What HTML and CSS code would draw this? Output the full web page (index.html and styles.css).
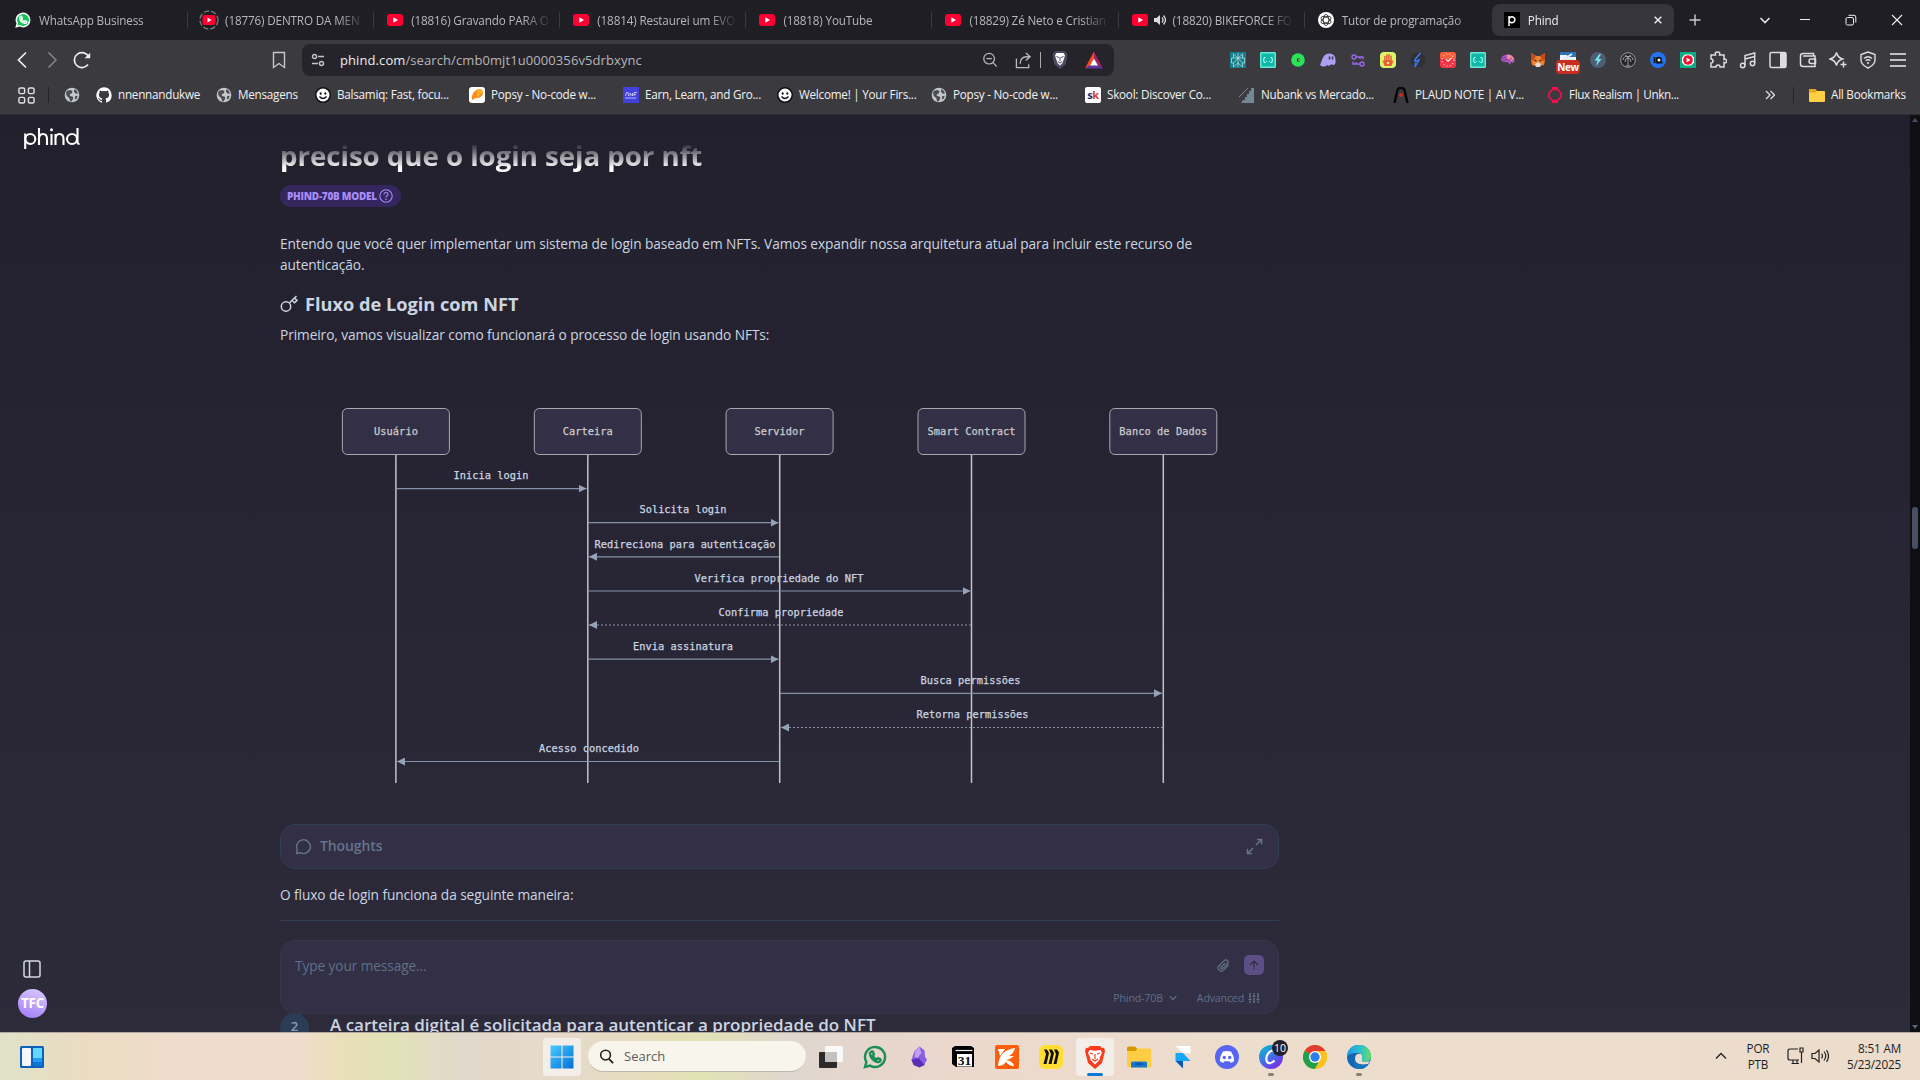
FILE: index.html
```html
<!DOCTYPE html>
<html lang="pt">
<head>
<meta charset="utf-8">
<title>Phind</title>
<link rel="stylesheet" href="styles.css">
</head>
<body>
<svg class="defs" width="0" height="0">
  <symbol id="yt" viewBox="0 0 16 16"><rect y="2" width="16" height="12" rx="3" fill="#f03"/><path d="M6.3 5.3v5.4L11 8z" fill="#fff"/></symbol>
  <symbol id="globe" viewBox="0 0 16 16"><circle cx="8" cy="8" r="7.3" fill="#c3c6ca"/><path d="M3 3.8l3.6-.9 1.8 1.3-.4 2L5.700 7.300 6 9l3 .7.2 2-1.700 2.900-1.500-.3-.6-3-2.600-2.200L2 6zM10.200 2l2.500 1.700 1.300 2.800-2.200.3-1.800-2zM11 9.300l2.700-.6-1 3-1.600.8z" fill="#4b4d52"/></symbol>
  <symbol id="smile" viewBox="0 0 16 16"><circle cx="8" cy="8" r="8" fill="#111"/><circle cx="8" cy="8" r="6.500" fill="#fff"/><ellipse cx="5.700" cy="6.500" rx="1" ry="1.300" fill="#111"/><ellipse cx="10.300" cy="6.500" rx="1" ry="1.300" fill="#111"/><path d="M4.500 9.500q3.500 4 7 0" fill="none" stroke="#111" stroke-width="1.300"/></symbol>
  <symbol id="wa" viewBox="0 0 24 24"><path d="M2 22l1.400-5A10 10 0 1 1 7 20.600z"/><path d="M8.500 6.500c-1 .4-1.700 1.600-1.400 3 .7 3.500 4 6.800 7.500 7.500 1.400.2 2.600-.6 3-1.700l-.2-.9-2.300-1.200-1.400 1.300c-1.700-.6-3.300-2.100-4-3.900l1.200-1.400-1.100-2.500z" class="phone"/></symbol>
  <symbol id="brackets" viewBox="0 0 16 16"><rect width="16" height="16" rx="1" fill="#0cb8a6"/><rect x=".7" y=".7" width="14.600" height="14.600" rx="1" fill="none" stroke="#6ae9da" stroke-width="1.400"/><path d="M5.500 5.500H4v2L3.200 8l.8.500v2h1.500M10.500 5.500H12v2l.8.500-.8.500v2h-1.500" fill="none" stroke="#d5fff9"/><path d="M6.300 9.500h.8M8.900 9.500h.8" stroke="#d5fff9"/></symbol>
</svg>

<header class="tabs">
  <div class="tab"><svg class="ic wa-fill"><use href="#wa"/></svg><span>WhatsApp Business</span></div>
  <div class="tab"><svg class="ic spin" viewBox="0 0 20 20"><circle cx="10" cy="10" r="9" fill="none" stroke="#77757c" stroke-width="1.400" stroke-dasharray="5.400 2"/><rect x="3.500" y="5" width="13" height="10" rx="2" fill="#f03"/><path d="M8.500 7.500v5l4-2.500z" fill="#fff"/></svg><span>(18776) DENTRO DA MEN</span></div>
  <div class="tab"><svg class="ic"><use href="#yt"/></svg><span>(18816) Gravando PARA O</span></div>
  <div class="tab"><svg class="ic"><use href="#yt"/></svg><span>(18814) Restaurei um EVO</span></div>
  <div class="tab"><svg class="ic"><use href="#yt"/></svg><span>(18818) YouTube</span></div>
  <div class="tab"><svg class="ic"><use href="#yt"/></svg><span>(18829) Zé Neto e Cristian</span></div>
  <div class="tab playing"><svg class="ic"><use href="#yt"/></svg><svg class="ic audio" viewBox="0 0 14 14"><path d="M1 5h2.500L7 2v10L3.500 9H1z" fill="#ddd"/><path d="M9 4.500q2 2.500 0 5M10.500 2.500q4 4.500 0 9" fill="none" stroke="#ddd" stroke-width="1.300"/></svg><span>(18820) BIKEFORCE FO</span></div>
  <div class="tab last"><svg class="ic" viewBox="0 0 16 16"><circle cx="8" cy="8" r="8" fill="#fff"/><g fill="none" stroke="#222" stroke-width=".8"><ellipse cx="8" cy="8" rx="2.800" ry="5.500"/><ellipse cx="8" cy="8" rx="2.800" ry="5.500" transform="rotate(60 8 8)"/><ellipse cx="8" cy="8" rx="2.800" ry="5.500" transform="rotate(120 8 8)"/></g></svg><span>Tutor de programação</span></div>
  <div class="tab active"><svg class="ic" viewBox="0 0 16 16"><rect width="16" height="16" fill="#000"/><path d="M5 14V4M5 7a3 3 0 1 1 0 1.500" fill="none" stroke="#fff" stroke-width="1.500"/></svg><span>Phind</span><svg class="close" viewBox="0 0 8 8"><path d="M.7.700l6.600 6.600M7.300.700L.7 7.300" stroke="#e8e8ea" stroke-width="1.500"/></svg></div>
  <svg class="win plus" viewBox="0 0 12 12"><path d="M6 .5v11M.5 6h11" stroke="#ccc" stroke-width="1.400"/></svg>
  <svg class="win" viewBox="0 0 12 12"><path d="M1.500 4L6 8.500 10.500 4" fill="none" stroke="#e5e5e5" stroke-width="1.600"/></svg>
  <svg class="win min" viewBox="0 0 12 12"><path d="M1 5.500h10" stroke="#eee"/></svg>
  <svg class="win" viewBox="0 0 12 12"><rect x="1" y="3.500" width="7.500" height="7.500" rx="1.500" fill="none" stroke="#eee"/><path d="M3.500 1.300H9Q10.800 1.300 10.800 3v5.500" fill="none" stroke="#eee"/></svg>
  <svg class="win" viewBox="0 0 12 12"><path d="M1 1l10 10M11 1L1 11" stroke="#eee" stroke-width="1.100"/></svg>
</header>

<div class="toolbar">
  <svg class="nav back" viewBox="0 0 18 18"><path d="M12 1.500L4.500 9l7.500 7.500" fill="none" stroke="#eee" stroke-width="1.700"/></svg>
  <svg class="nav" viewBox="0 0 18 18"><path d="M5.500 1.500L13 9l-7.500 7.500" fill="none" stroke="#85848a" stroke-width="1.500"/></svg>
  <svg class="nav" viewBox="0 0 18 18"><path d="M15 13.500A7.500 7.500 0 1 1 15.800 6" fill="none" stroke="#eee" stroke-width="1.700"/><path d="M11.500 7.200h5.700V1.800z" fill="#eee"/></svg>
  <svg class="mark" viewBox="0 0 18 18"><path d="M3.500 1.500h11v15L9 12.500l-5.500 4z" fill="none" stroke="#c9c9cd" stroke-width="1.400"/></svg>
  <div class="url">
    <svg class="tune" viewBox="0 0 14 14"><g fill="none" stroke="#c5c5ca" stroke-width="1.400"><circle cx="3.500" cy="3.500" r="2"/><path d="M7 3.500h6M1 10.500h6"/><circle cx="10.500" cy="10.500" r="2"/></g></svg>
    <span class="addr"><b>phind.com</b>/search/cmb0mjt1u0000356v5drbxync</span>
    <svg class="u1" viewBox="0 0 18 18"><g fill="none" stroke="#b9b8bd" stroke-width="1.400"><circle cx="8" cy="7.500" r="6"/><path d="M12.500 12l4 4.500M5 7.500h6"/></g></svg>
    <svg class="u2" viewBox="0 0 18 18"><path d="M1.500 7v9.500h13V13M5.500 12.500q0-7.500 7-7.500h3M11.500 1l4.500 4-4.500 4" fill="none" stroke="#b9b8bd" stroke-width="1.400"/></svg>
    <i class="bar"></i>
    <svg class="u3" viewBox="0 0 18 18"><path d="M4.500 0h9L16.500 3 15 13l-6 5-6-5L1.500 3z" fill="#4b4c60"/><path d="M5.500 2h7L14 4.500 12.500 9l-1 3L9 14.500 6.500 12l-1-3L4 4.500z" fill="#fff"/><path d="M5.500 5.500l2.500 1M12.500 5.500l-2.500 1M9 6v4M6.800 10.500L9 12l2.200-1.500" stroke="#4b4c60" fill="none"/></svg>
    <svg class="u4" viewBox="0 0 18 18"><path d="M9 .5L0 17.500l5-3L9 7.500z" fill="#ff4a20"/><path d="M9 .5l9 17-5-3L9 7.500z" fill="#9e1f63"/><path d="M0 17.500h18l-5-3.300H5z" fill="#5d36a0"/><path d="M9 7.500l4 6.900H5z" fill="#fff"/></svg>
  </div>
  <div class="exts">
    <svg viewBox="0 0 16 16"><rect width="16" height="16" fill="#1a7f8c"/><path d="M8 1v14M3.500 2L8 6l4.500-4v4h2v5h-2v4L8 11l-4.500 4v-4h-2V6h2zM3.500 6h9M8 6l-4.500 5M8 6l4.500 5" fill="none" stroke="#bfe8ec" stroke-width=".7"/></svg>
    <svg viewBox="0 0 16 16"><use href="#brackets"/></svg>
    <svg viewBox="0 0 16 16"><circle cx="8" cy="8" r="6.800" fill="#2ae357"/><circle cx="8.500" cy="8" r="1.700" fill="#0b3a19"/><circle cx="9" cy="8" r=".8" fill="#fff"/></svg>
    <svg viewBox="0 0 16 16"><path d="M0 13C2 10 2 2 9 1.500c6 0 7 5 6.500 9-.5 3-3 3-4 1.500-1.500 2-3 2-4 1-1.500 1.500-5 2.500-7.500 0z" fill="#ab9ff2"/><path d="M9.500 4.500v3M12.500 4.500v3" stroke="#3b3a3f" stroke-width="1.500"/></svg>
    <svg viewBox="0 0 16 16"><g fill="none" stroke="#9767e8" stroke-width="1.400"><circle cx="4" cy="5" r="2"/><path d="M6 5h7v2.500M10 5v2"/><circle cx="12" cy="12" r="2"/><path d="M10 12H3v-2.500M6 12v-2"/></g></svg>
    <svg viewBox="0 0 16 16"><rect width="16" height="16" rx="4" fill="#dcf568"/><path d="M4.500 14L2.500 8.500h1.700V4h1.400v4h.5V2.500h1.500V8h.6V2h1.500v6h.6V3.500h1.400V8.500h1.800L11.500 14z" fill="#ed5a38"/><circle cx="8" cy="11" r="1.300" fill="#dcf568"/></svg>
    <svg viewBox="0 0 16 16"><circle cx="8" cy="8" r="7.500" fill="#313036"/><path d="M10.500 1L5 7.500v2l4-1.500-4 7 .5-4" fill="none" stroke="#397cf5" stroke-width="1.400"/></svg>
    <svg viewBox="0 0 16 16"><rect width="16" height="16" rx="3" fill="#f43444"/><rect width="16" height="7" rx="3" fill="#fb5d38"/><circle cx="8" cy="8" r="6" fill="none" stroke="#ffc0c5" stroke-width="1.200" stroke-dasharray="1.200 2"/><path d="M6 7l2 2.200L11.500 6" fill="none" stroke="#fff" stroke-width="1.100"/></svg>
    <svg viewBox="0 0 16 16"><use href="#brackets"/></svg>
    <svg viewBox="0 0 16 16"><path d="M1 8q0-4 4-5 5-2 8 2 3 4 0 6l-2-1-1 3-2-3q-5 1-7-2z" fill="#b05ac0"/><path d="M7 3q5-1 7 4l-3 2-4-2z" fill="#f08aa0"/><path d="M2 7l4-2M3 9l5-2M8 9l4-3" stroke="#5d3391" stroke-width=".8"/></svg>
    <svg viewBox="0 0 16 16"><path d="M1 1l5 3h4l5-3v7l-1 5-4 1-2 1-2-1-4-1-1-5z" fill="#f0802a"/><path d="M1 1l5 3-3 5-2-1zM15 1l-5 3 3 5 2-1z" fill="#c24d1c"/><path d="M5 12l3-2 3 2-1 3H6z" fill="#ddd"/><path d="M4.500 8l2 1M11.500 8l-2 1" stroke="#222" stroke-width="1.200"/></svg>
    <div class="new-ext"><svg viewBox="0 0 16 16"><rect width="16" height="16" fill="#2d75b5"/><path d="M0 3h7l1 2h8v8H0z" fill="#f4f4f4"/><path d="M12 2L3 8h9" fill="none" stroke="#d8ecfa" stroke-width="2"/></svg><em>New</em></div>
    <svg viewBox="0 0 16 16"><circle cx="8" cy="8" r="8" fill="#4f5e74"/><path d="M9.500 2L4.500 8.500h3L6 14l5.500-7H8.500l2.500-5z" fill="#6deaf2"/></svg>
    <svg viewBox="0 0 16 16"><circle cx="8" cy="8" r="7.300" fill="#252529" stroke="#9a9a9e" stroke-width="1"/><path d="M8 4v10M5.500 14h5M8 5Q4 3 3 8M8 5q4-2 5 3M8 6Q5 6 5 10M8 6q3 0 3 4M5 3l3 2 3-2" fill="none" stroke="#aaa" stroke-width=".9"/></svg>
    <svg viewBox="0 0 16 16"><circle cx="8" cy="8" r="8" fill="#2373f5"/><path d="M3.700 5h1.600v6H3.700z" fill="#111"/><circle cx="8.800" cy="8" r="3.200" fill="#111"/><circle cx="9" cy="8" r="1.500" fill="#fff"/><path d="M5.500 11h7v-1" stroke="#111" fill="none"/></svg>
    <svg viewBox="0 0 16 16"><rect width="16" height="16" fill="#0daa86"/><path d="M5 2.500h6l3 3v5l-3 3H5l-3-3v-5z" fill="#fff"/><circle cx="8" cy="8" r="4.800" fill="#f00d2e"/><path d="M6.500 5.500v5l4-2.500z" fill="#fff"/></svg>
    <svg class="big" viewBox="0 0 18 18"><path d="M2 4h4.500q-1-3 2-3t2 3H15v4.500q2.500-1 2.500 1.500T15 11.500V16h-4q0-2-2-2t-2 2H2v-4q2 0 2-2T2 8z" fill="none" stroke="#ddd" stroke-width="1.500"/></svg>
    <svg class="big" viewBox="0 0 18 18"><g fill="none" stroke="#ddd" stroke-width="1.500"><circle cx="3.700" cy="14.500" r="2.200"/><circle cx="13.500" cy="12.500" r="2.200"/><path d="M6 14.500V4.500L15.700 2v10M6 8l9.700-2.500"/></g></svg>
    <svg class="big" viewBox="0 0 18 18"><rect x="1" y="1.500" width="16" height="15" rx="1.500" fill="none" stroke="#ddd" stroke-width="1.500"/><path d="M11 2h6v14h-6z" fill="#ddd"/></svg>
    <svg class="big" viewBox="0 0 18 18"><g fill="none" stroke="#ddd" stroke-width="1.500"><path d="M14.500 5V2.500H4Q1.500 2.500 1.500 5v8q0 2.500 2.500 2.500h12V5H4"/><path d="M16.500 8H12q-2 0-2 2.200t2 2.200h4.500z"/></g></svg>
    <svg class="big" viewBox="0 0 18 18"><path d="M7.500 1.500Q8.500 6.500 13.500 8 8.500 9.500 7.500 14.500 6.500 9.500 1 8 6.500 6.500 7.500 1.500z" fill="none" stroke="#ddd" stroke-width="1.400"/><path d="M14.500 10.500v6M11.500 13.500h6" stroke="#ddd" stroke-width="1.500"/></svg>
    <svg class="big" viewBox="0 0 18 18"><g fill="none" stroke="#ddd" stroke-width="1.400"><path d="M9 1l7 2.500v6Q15.500 14 9 17 2.500 14 2 9.500v-6z"/><path d="M5 7.500q4-3.500 8 0M6.700 9.800q2.300-2 4.600 0"/></g><circle cx="9" cy="12" r="1.100" fill="#ddd"/></svg>
    <svg class="big" viewBox="0 0 18 18"><path d="M1 3h16M1 9h16M1 15h16" stroke="#eee" stroke-width="1.400"/></svg>
  </div>
</div>

<nav class="bookmarks">
  <svg class="apps" viewBox="0 0 18 18"><g fill="none" stroke="#e2e2e4" stroke-width="1.500"><rect x="1" y="1" width="6" height="6" rx="1.500"/><rect x="11" y="1" width="6" height="6" rx="1.500"/><rect x="1" y="11" width="6" height="6" rx="1.500"/><rect x="11" y="11" width="6" height="6" rx="1.500"/></g></svg>
  <i class="sep"></i>
  <div class="bm bare"><svg class="ic"><use href="#globe"/></svg></div>
  <div class="bm git"><svg class="ic" viewBox="0 0 16 16"><path d="M8 .2a8 8 0 0 0-2.500 15.500c.4.100.5-.2.500-.4v-1.500c-2.200.5-2.700-1-2.700-1-.4-.9-.9-1.200-.9-1.200-.7-.5.100-.5.100-.5.800.1 1.200.8 1.200.8.700 1.200 1.900.9 2.300.7.100-.5.300-.9.500-1.100C4.700 11.300 2.900 10.600 2.900 7.600c0-.9.300-1.600.8-2.100-.1-.2-.4-1 .1-2.100 0 0 .7-.2 2.200.8a7.600 7.600 0 0 1 4 0c1.500-1 2.200-.8 2.200-.8.400 1.100.2 1.900.1 2.100.5.600.8 1.300.8 2.100 0 3.100-1.900 3.700-3.600 3.900.3.300.5.800.5 1.500v2.200c0 .2.100.5.600.4A8 8 0 0 0 8 .2z" fill="#fff"/></svg><span>nnennandukwe</span></div>
  <div class="bm msg"><svg class="ic"><use href="#globe"/></svg><span>Mensagens</span></div>
  <div class="bm"><svg class="ic"><use href="#smile"/></svg><span>Balsamiq: Fast, focu...</span></div>
  <div class="bm"><svg class="ic" viewBox="0 0 16 16"><rect width="16" height="16" rx="3" fill="#fff"/><path d="M8 2.500Q13 1 14 5q0 6-7 6L3 13Q2 6 8 2.500z" fill="#ff8a1c"/><path d="M8 2.500Q13 1 14 5l-6 5z" fill="#ffb427"/></svg><span>Popsy - No-code w...</span></div>
  <div class="bm"><svg class="ic" viewBox="0 0 16 16"><rect width="16" height="16" fill="#4340dc"/><path d="M2.500 9l1-3.500h1.500L5.500 9M7 9V6l2.500 3V6M11 9V5.500h3M11 7.500h2M2 11h11" fill="none" stroke="#d9d8ff" stroke-width=".8"/></svg><span>Earn, Learn, and Gro...</span></div>
  <div class="bm"><svg class="ic"><use href="#smile"/></svg><span>Welcome! | Your Firs...</span></div>
  <div class="bm"><svg class="ic"><use href="#globe"/></svg><span>Popsy - No-code w...</span></div>
  <div class="bm"><b class="ic sk"><u>s</u>k</b><span>Skool: Discover Co...</span></div>
  <div class="bm"><svg class="ic" viewBox="0 0 16 16"><path d="M0 16h2l2-3h2v-3h2V7h2V4h2V1h3v15z" fill="#748893"/><path d="M0 10L9 1" stroke="#748893" stroke-width="1"/></svg><span>Nubank vs Mercado...</span></div>
  <div class="bm"><svg class="ic" viewBox="0 0 16 16"><path d="M1.500 16L4.500 3Q5 1 8 1t3.500 2l3 13" fill="none" stroke="#050505" stroke-width="2.400"/><circle cx="8" cy="8" r="2" fill="#d3281c"/></svg><span>PLAUD NOTE | AI V...</span></div>
  <div class="bm flux"><svg class="ic" viewBox="0 0 16 16"><path d="M5.500 2.500h5L14 6v4l-3.500 3.500h-5L2 10V6z" fill="none" stroke="#fb0b4b" stroke-width="1.700"/><path d="M5 0h6v3H5zM5 13h6v3H5z" fill="#fb0b4b"/></svg><span>Flux Realism | Unkn...</span></div>
  <svg class="more" viewBox="0 0 10 10"><path d="M1 1l4 4-4 4M5.500 1l4 4-4 4" fill="none" stroke="#ddd" stroke-width="1.300"/></svg>
  <i class="sep"></i>
  <div class="bm all"><svg class="ic" viewBox="0 0 16 16"><path d="M0 3q0-1 1-1h5l2 2h7q1 0 1 1v9q0 1-1 1H1q-1 0-1-1z" fill="#ffcf44"/><path d="M1 2h5l2 2-1.500 1.500H0V3q0-1 1-1z" fill="#e5a91e"/></svg><span>All Bookmarks</span></div>
</nav>

<section class="page">
  <aside class="side">
    <svg class="logo" viewBox="0 0 56 22" aria-label="phind"><g fill="none" stroke="#fff" stroke-width="2.100"><path d="M1.200 5.500V21"/><circle cx="6.300" cy="11" r="5"/><path d="M15 0v17M15 11q0-5 4-5t4 5v6M27.500 6v11M31.500 17V6M31.500 11q0-5 4-5t4 5v6"/><circle cx="48" cy="11" r="5"/><path d="M53.500 0v14q0 2 2 2"/></g><circle cx="27.500" cy="1.800" r="1.500" fill="#fff"/></svg>
    <div class="side-foot">
      <svg class="panel" viewBox="0 0 18 18"><rect x="1" y="1" width="16" height="16" rx="2" fill="none" stroke="#d2d8e4" stroke-width="1.500"/><path d="M6.500 1v16" stroke="#d2d8e4" stroke-width="1.500"/></svg>
      <div class="avatar">TFC</div>
    </div>
  </aside>
  <main class="answer">
    <h1>preciso que o login seja por nft</h1>
    <div class="model"><span>PHIND-70B MODEL</span><svg viewBox="0 0 14 14"><g fill="none" stroke="#a78bfa" stroke-width="1.100"><circle cx="7" cy="7" r="6.200"/><path d="M5 5.500q0-2 2-2t2 1.800q0 1-1.200 1.600Q7 7.300 7 8.500"/></g><circle cx="7" cy="10.300" r=".8" fill="#a78bfa"/></svg></div>
    <p class="intro">Entendo que você quer implementar um sistema de login baseado em NFTs. Vamos expandir nossa arquitetura atual para incluir este recurso de<br>autenticação.</p>
    <h2><svg viewBox="0 0 18 18"><g fill="none" stroke="#cbd5e1" stroke-width="1.500"><circle cx="6" cy="11.500" r="4.700"/><path d="M9.300 8L16.500 1M12 5.300l2.500 2.500 2.500-2.400L14.500 3"/></g></svg><span>Fluxo de Login com NFT</span></h2>
    <p class="first">Primeiro, vamos visualizar como funcionará o processo de login usando NFTs:</p>
    <svg class="diagram" width="999" height="384" viewBox="280 406 999 384">
      <defs><marker id="arrow" markerUnits="userSpaceOnUse" markerWidth="8" markerHeight="8" refX="8" refY="4" orient="auto"><path d="M0 0l8 4-8 4z" fill="#94a3b8"/></marker></defs>
      <g class="msg-text">
        <text x="491" y="479" textLength="75">Inicia login</text>
        <text x="683" y="513" textLength="87">Solicita login</text>
        <text x="685" y="548" textLength="181">Redireciona para autenticação</text>
        <text x="779" y="582" textLength="169">Verifica propriedade do NFT</text>
        <text x="781" y="616" textLength="125">Confirma propriedade</text>
        <text x="683" y="650" textLength="100">Envia assinatura</text>
        <text x="970.500" y="684" textLength="100">Busca permissões</text>
        <text x="972.500" y="718" textLength="112">Retorna permissões</text>
        <text x="589" y="752" textLength="100">Acesso concedido</text>
      </g>
      <path class="life" d="M395.900 454.500V783M587.800 454.500V783M779.700 454.500V783M971.500 454.500V783M1163.300 454.500V783"/>
      <g class="arrows">
        <path d="M396 488.600H586.500"/><path d="M588 522.700H778.500"/><path d="M779 556.800H589"/><path d="M588 591H970.500"/>
        <path class="dash" d="M971 625H589"/><path d="M588 659.200H778.500"/><path d="M780 693.300H1162"/><path class="dash" d="M1163 727.500H781"/><path d="M779 761.500H397"/>
      </g>
      <g class="actors">
        <rect x="342.400" y="408.500" width="107" height="46" rx="5"/><rect x="534.300" y="408.500" width="107" height="46" rx="5"/><rect x="726.100" y="408.500" width="107" height="46" rx="5"/><rect x="918" y="408.500" width="107" height="46" rx="5"/><rect x="1109.800" y="408.500" width="107" height="46" rx="5"/>
        <text x="395.900" y="435" textLength="44">Usuário</text><text x="587.800" y="435" textLength="50">Carteira</text><text x="779.500" y="435" textLength="50">Servidor</text><text x="971.500" y="435" textLength="88">Smart Contract</text><text x="1163.300" y="435" textLength="88">Banco de Dados</text>
      </g>
    </svg>
    <div class="thoughts">
      <svg viewBox="0 0 18 18"><path d="M1.500 16.500l1-4A7.300 7.300 0 1 1 5.500 15.600z" fill="none" stroke="#64748b" stroke-width="1.500" stroke-linejoin="round"/></svg>
      <span>Thoughts</span>
      <svg viewBox="0 0 18 18"><path d="M10.500 7.500L16.500 1.500M11.500 1.500h5v5M7.500 10.500l-6 6M1.500 11.500v5h5" fill="none" stroke="#64748b" stroke-width="1.600"/></svg>
    </div>
    <p class="flow">O fluxo de login funciona da seguinte maneira:</p>
    <hr>
    <div class="step"><b>2</b><strong>A carteira digital é solicitada para autenticar a propriedade do NFT</strong></div>
    <div class="composer">
      <div class="row"><span class="ph">Type your message...</span>
        <svg class="clip" viewBox="0 0 14 14"><path d="M12.500 6.500l-5.500 5.500a3.300 3.300 0 0 1-4.800-4.700L7.800 1.800a2.300 2.300 0 0 1 3.400 3.300L5.900 10.400a1.100 1.100 0 0 1-1.700-1.500L9 4.200" fill="none" stroke="#64748b" stroke-width="1.300"/></svg>
        <div class="send"><svg viewBox="0 0 10 10"><path d="M5 9.500V1M1 5l4-4 4 4" fill="none" stroke="#302d44" stroke-width="1.200"/></svg></div></div>
      <div class="row opts"><span>Phind-70B</span><svg class="chev" viewBox="0 0 8 8"><path d="M.7 2.200L4 5.700l3.300-3.500" fill="none" stroke="#64748b" stroke-width="1.200"/></svg><span>Advanced</span><svg class="sliders" viewBox="0 0 12 12"><path d="M2 1v5M2 9v2M6 1v1.500M6 5.500V11M10 1v5M10 9v2M.5 7.500h3M4.500 4h3M8.500 7.500h3" stroke="#64748b" stroke-width="1.400"/></svg></div>
    </div>
  </main>
  <div class="scroll"><i class="up"></i><i class="thumb"></i><i class="down"></i></div>
</section>

<footer class="taskbar">
  <svg class="widgets" viewBox="0 0 24 22"><rect width="24" height="22" rx="1.500" fill="#0a63b8"/><rect x="2" y="2" width="9" height="18" rx="1" fill="#f4f6f9"/><path d="M13 2h9v10h-9z" fill="#64d6ff"/><path d="M13 12h9v4h-9z" fill="#1d9bf5"/><path d="M13 16h9v4h-9z" fill="#0878d8"/></svg>
  <div class="apps-row">
    <div class="app start on"><svg viewBox="0 0 24 24"><defs><linearGradient id="wg" x2="1" y2="1"><stop stop-color="#4ccaff"/><stop offset="1" stop-color="#0070d8"/></linearGradient></defs><path d="M.5.500h11v11H.5zM12.500.500h11v11h-11zM.5 12.500h11v11H.5zM12.500 12.500h11v11h-11z" fill="url(#wg)"/></svg></div>
    <div class="search"><svg viewBox="0 0 16 16"><circle cx="7" cy="6.500" r="5.200" fill="none" stroke="#222" stroke-width="1.700"/><path d="M10.500 10.500L15 15" stroke="#222" stroke-width="2"/></svg><span>Search</span></div>
    <div class="app"><svg viewBox="0 0 24 24"><rect y="7" width="18" height="16" rx="1" fill="#2c2b2a"/><rect x="6" y="1" width="18" height="16" rx="1" fill="#fbfbfb" opacity=".95"/><path d="M6 7h12v10H6z" fill="#c3c2c1"/></svg></div>
    <div class="app"><svg class="wa-line" viewBox="0 0 24 24"><use href="#wa"/></svg></div>
    <div class="app"><svg viewBox="0 0 24 24"><path d="M12.500 1.500L17.500 5.500l.5 6.500 2 2.500-3 6-9 .5L4.500 15l3-9z" fill="#8b5be0"/><path d="M12.500 1.500l2 6.500-4 5-3-1 .5-6z" fill="#bba0f5"/><path d="M4.500 15l7-2 6 7-5 2.500-6-2.500z" fill="#5a2fb5"/></svg></div>
    <div class="app"><svg viewBox="0 0 24 24"><path d="M1 3l3-2h16l3 2v19H5l-4-3z" fill="#000"/><path d="M4.500 5.500h17" stroke="#eee" stroke-width="1.200"/><rect x="6" y="9" width="15" height="12.500" fill="#fff"/><text x="13.500" y="20" text-anchor="middle" class="cal">31</text></svg></div>
    <div class="app"><svg viewBox="0 0 24 24"><rect width="24" height="24" rx="2" fill="#ff5f0a"/><path d="M3 21Q4 5 20 3q-1 5-6 8h5q-3 3-8 4 7 1 8 6-5 0-8-4-3 4-8 4zM3 4h7L5 11z" fill="#fff"/></svg></div>
    <div class="app"><svg viewBox="0 0 24 24"><rect width="24" height="24" rx="6" fill="#ffdd33"/><path d="M5 4.500h3l2 3.500-2.500 11h-3L7 9zM10 4.500h3L15 8l-2.500 11h-3L12 9zM15 4.500h3l2 3-2.500 11.500h-3L17 9z" fill="#111"/></svg></div>
    <div class="app on run"><svg viewBox="0 0 24 24"><path d="M7 1h10l2 2 2-.3 1 3.300-3 12-7 6-7-6L2 6l1-3.300L5 3z" fill="#fb3b1c"/><path d="M6.500 5l5.500.7 5.500-.7 1.500 3-2 4-.5 3L12 19.500 7.500 15 7 12 5 8z" fill="#fff"/><path d="M7 8l3 1M17 8l-3 1M12 9v5M9 14l3 2 3-2" fill="none" stroke="#fb3b1c" stroke-width="1.200"/></svg></div>
    <div class="app"><svg viewBox="0 0 24 24"><path d="M0 3q0-1.500 1.500-1.500H8L10.500 4v4H0z" fill="#d99700"/><path d="M0 6h8.500l2-2.500H23q1 0 1 1V21q0 1.500-1.500 1.500h-21Q0 22.500 0 21z" fill="#ffcd43"/><path d="M4 22.500V18q0-1.500 1.500-1.500h13Q20 16.500 20 18v4.500z" fill="#1678cc"/><path d="M8 19h8" stroke="#0b4e92" stroke-width="1.500"/></svg></div>
    <div class="app"><svg viewBox="0 0 24 24"><path d="M4.500 1h15v7H12z" fill="#fff"/><path d="M4.500 8H12l7.500 8h-15z" fill="#14a7f5"/><path d="M4.500 16H12v7.500z" fill="#0657b8"/></svg></div>
    <div class="app"><svg viewBox="0 0 24 24"><circle cx="12" cy="12" r="12" fill="#5865f2"/><path d="M8 6.500q4-1 8 0 3 4 3.200 9.500-2 1.500-3.700 1.800l-.8-1.500h-5.400l-.8 1.500Q6.800 17.500 4.800 16 5 10.500 8 6.500z" fill="#fff"/><circle cx="9.300" cy="12.500" r="1.700" fill="#5865f2"/><circle cx="14.700" cy="12.500" r="1.700" fill="#5865f2"/></svg></div>
    <div class="app dot"><svg viewBox="0 0 24 24"><defs><linearGradient id="cv" x2=".7" y2="1"><stop stop-color="#00c7cb"/><stop offset=".5" stop-color="#3b79e8"/><stop offset="1" stop-color="#7d2ae8"/></linearGradient></defs><circle cx="12" cy="12" r="12" fill="url(#cv)"/><path d="M16 7Q13 4 9.500 8T8 17q3 3 7.500-1.500" fill="none" stroke="#fff" stroke-width="2.200"/></svg><em>10</em></div>
    <div class="app"><svg viewBox="0 0 24 24"><circle cx="12" cy="12" r="12" fill="#fcc31e"/><path d="M12 12L1.600 6A12 12 0 0 1 22.400 6z" fill="#e33b2e"/><path d="M12 12L1.600 6A12 12 0 0 0 12 24l5-9z" fill="#229f4b"/><path d="M12 6h10.400A12 12 0 0 1 12 24l5-9z" fill="#fcc31e"/><circle cx="12" cy="12" r="6" fill="#fff"/><circle cx="12" cy="12" r="4.700" fill="#2f7de9"/></svg></div>
    <div class="app dot"><svg viewBox="0 0 24 24"><defs><linearGradient id="eg" x2="1"><stop stop-color="#1f9be6"/><stop offset=".6" stop-color="#31c3c8"/><stop offset="1" stop-color="#6fdc58"/></linearGradient></defs><circle cx="12" cy="12" r="12" fill="#1266b5"/><path d="M0 12A12 12 0 0 1 24 11q0 6-6 6-4 0-3-3 1-7-6-6-7 0-9 4z" fill="url(#eg)"/><path d="M8 14q0-6 6-5 2 2 1 5-1 3 3 3 3 0 5-1l-2 3Q8 21 8 14z" fill="#ecdccd"/><path d="M8 12q-2 8 8 8h5q-4 5-10 4-7-3-3-12z" fill="#1475bd"/></svg></div>
  </div>
  <div class="tray">
    <svg class="caret" viewBox="0 0 12 12"><path d="M1 8.500l5-5 5 5" fill="none" stroke="#222" stroke-width="1.300"/></svg>
    <div class="lang">POR<br>PTB</div>
    <svg class="net" viewBox="0 0 17 18"><path d="M11 2H3Q1 2 1 4v7q0 2 2 2h9M4.500 16.500H12M6 13v3.500M10 13v3.500M13 1h3v4h-3zM14.500 5v11" fill="none" stroke="#222" stroke-width="1.200"/></svg>
    <svg class="vol" viewBox="0 0 18 16"><path d="M1 5.500h3L8 2v12L4 10.500H1zM10.500 5.500q2 2.500 0 5M13 3.500q3.500 4.500 0 9M15.500 2q4 6 0 12" fill="none" stroke="#222" stroke-width="1.200"/></svg>
    <div class="clock">8:51 AM<br>5/23/2025</div>
  </div>
</footer>
</body>
</html>
```
FILE: styles.css
```css
* { box-sizing: border-box; }
body { margin: 0; width: 1920px; height: 1080px; overflow: hidden; display: flex; flex-direction: column; background: #2b2938; font: 12px/16px "Open Sans", "Noto Sans", sans-serif; color: #e4e4e6; }
svg { display: block; flex: none; }
.defs { position: absolute; }
.ic { width: 16px; height: 16px; flex: none; }

/* tab strip */
.tabs { height: 40px; flex: none; background: #1f1e24; display: flex; align-items: center; padding-left: 2px; }
.tab { width: 186.100px; height: 16px; flex: none; display: flex; align-items: center; gap: 8px; padding: 0 12px 0 13px; border-right: 1px solid #3a393e; color: #b8b7bb; font-size: 11.700px; letter-spacing: -.15px; }
.tab span { flex: 1; white-space: nowrap; line-height: 18px; margin-top: -1px; -webkit-mask-image: linear-gradient(90deg, #000 112px, transparent 141px); mask-image: linear-gradient(90deg, #000 112px, transparent 141px); }
.tab.playing span { -webkit-mask-image: linear-gradient(90deg, #000 92px, transparent 121px); mask-image: linear-gradient(90deg, #000 92px, transparent 121px); }
.tab .spin { width: 20px; height: 20px; margin: 0 -2px; }
.tab .audio { width: 14px; height: 14px; margin: 0 -2px 0 -3px; }
.tab.last { border: 0; }
.tab.active { width: 182px; height: 32px; margin-left: 1px; background: #36353b; border: 0; border-radius: 8px; color: #eee; padding: 0 12px; }
.wa-fill { fill: #14c656; stroke: #fff; stroke-width: 2.200; }
.wa-fill .phone { fill: #fff; stroke: none; }
.close { width: 8px; height: 8px; }
.win { width: 12px; height: 12px; margin-left: 34px; }
.plus { margin-left: 15px; margin-right: 24px; }
.win.min { margin-left: 28px; }

/* toolbar */
.toolbar { height: 40px; flex: none; background: #3b3a3f; display: flex; align-items: center; padding: 0 13px; }
.nav { width: 18px; height: 18px; margin-right: 12px; }
.back { margin-left: 1px; margin-right: 11px; }
.mark { width: 18px; height: 18px; margin: 0 14px 0 167px; }
.url { width: 812px; height: 32px; background: #25242a; border-radius: 8px; display: flex; align-items: center; padding: 0 11px 0 9px; }
.tune { width: 14px; height: 14px; margin-right: 15px; }
.addr { flex: 1; font-size: 13px; color: #b6b6bb; letter-spacing: .09px; white-space: nowrap; }
.addr b { font-weight: 400; color: #ececee; }
.u1 { width: 16px; height: 16px; margin-right: 17px; }
.u2 { width: 17px; height: 17px; margin-right: 8px; }
.bar { width: 1px; height: 16px; background: #aaa; margin-right: 10px; }
.u3 { width: 18px; height: 18px; margin-right: 16px; }
.u4 { width: 18px; height: 18px; }
.exts { display: flex; gap: 14px; margin-left: 116px; align-items: center; }
.exts svg { width: 16px; height: 16px; }
.exts .big { width: 18px; height: 18px; margin: 0 -1px; }
.new-ext { position: relative; width: 16px; height: 16px; }
.new-ext em { position: absolute; left: -4px; top: 8px; width: 24px; height: 14px; border-radius: 4px; background: #cb2c20; color: #fff; font: bold 10px/14px "Open Sans", sans-serif; letter-spacing: -.3px; text-align: center; }

/* bookmarks */
.bookmarks { height: 35px; flex: none; background: #3b3a3f; border-bottom: 1px solid #2e2c35; display: flex; align-items: center; padding: 0 14px 4px 18px; }
.apps { width: 17px; height: 17px; }
.sep { width: 1px; height: 16px; background: #25242a; margin: 0 15px 0 13px; }
.bm { width: 154px; flex: none; display: flex; gap: 6px; align-items: center; white-space: nowrap; font-size: 11.700px; letter-spacing: -.24px; color: #f2f2f3; }
.bm span { margin-top: -2px; }
.bm.bare { width: 32px; }
.bm.git { width: 120px; }
.bm.msg { width: 99px; }
.bm.flux { letter-spacing: -.4px; }
.bm.all { width: auto; }
.sk { background: #fff; border-radius: 2px; font: bold 11px/15px "Open Sans", sans-serif; color: #e0392b; text-align: center; letter-spacing: -.5px; }
.sk u { text-decoration: none; color: #262a70; }
.more { width: 10px; height: 10px; margin-left: 64px; margin-right: 5px; }

/* page */
.page { position: relative; height: 917px; flex: none; overflow: hidden; display: flex; background: linear-gradient(#22202d, #2d2a3a); font-family: "Open Sans", "Noto Sans", sans-serif; color: #cbd5e1; }
.side { width: 280px; flex: none; display: flex; flex-direction: column; justify-content: space-between; padding: 13px 0 14px 18px; }
.logo { width: 56px; height: 22px; margin-left: 6px; }
.side-foot { display: flex; flex-direction: column; gap: 11px; }
.panel { width: 18px; height: 18px; margin-left: 5px; }
.avatar { width: 29px; height: 29px; border-radius: 50%; background: linear-gradient(20deg, #a07af8, #dccbff); color: #fff; font: bold 13.500px/28px "Open Sans", sans-serif; letter-spacing: -.3px; text-align: center; display: flex; justify-content: center; }
.answer { position: relative; width: 999px; flex: none; }
h1 { margin: 22px 0 0; height: 37px; font-size: 27.600px; line-height: 37px; color: #fff; white-space: nowrap; -webkit-mask-image: linear-gradient(transparent 6px, #000 31px); mask-image: linear-gradient(transparent 6px, #000 31px); }
.model { margin-top: 11px; width: 121px; height: 22px; border-radius: 11px; background: #35265f; color: #a78bfa; font-size: 10px; line-height: 20px; font-weight: 800; letter-spacing: -.25px; display: flex; align-items: center; padding: 0 8px 0 7px; justify-content: space-between; white-space: nowrap; }
.model span { margin-top: -1px; }
.model svg { width: 14px; height: 14px; }
p { margin: 0; font-size: 13.700px; line-height: 21.300px; letter-spacing: -.08px; white-space: nowrap; }
.intro { margin-top: 26px; }
h2 { display: flex; gap: 7px; align-items: center; margin: 15px 0 0; height: 26px; font-size: 18.200px; line-height: 26px; white-space: nowrap; }
h2 svg { width: 18px; height: 18px; }
.first { margin-top: 7px; }
.diagram { margin-top: 61px; font-family: "DejaVu Sans Mono", monospace; font-size: 10.300px; text-anchor: middle; }
.msg-text { fill: #cbd5e1; stroke: #cbd5e1; stroke-width: .25; }
.life { stroke: #c4c2c4; stroke-width: 1.500; }
.arrows path { stroke: #8392a8; stroke-width: 1.200; marker-end: url(#arrow); }
.arrows .dash { stroke-dasharray: 2 2; }
.actors rect { fill: #322f46; stroke: #aaa8ac; }
.actors text { fill: #ccc; stroke: #ccc; stroke-width: .25; }
.thoughts { margin-top: 34px; height: 45px; border: 1px solid #303f54; border-radius: 15px; background: #322f46; display: flex; align-items: center; padding: 0 15px 0 14px; gap: 8px; color: #64748b; font-size: 14px; font-weight: 600; letter-spacing: -.1px; }
.thoughts svg { width: 17px; height: 17px; }
.thoughts span { flex: 1; }
.flow { margin-top: 15px; }
hr { margin: 15px 0 0; border: 0; height: 1px; background: #304052; }
.step { display: flex; align-items: flex-start; margin-top: 92px; height: 29px; gap: 21px; font-size: 17px; line-height: 24px; white-space: nowrap; }
.step b { width: 29px; height: 29px; border-radius: 50%; background: #2b3c57; color: #8c9bb2; font-size: 13px; line-height: 27px; text-align: center; font-weight: 600; }
.step strong { font-weight: 600; }
.composer { position: absolute; left: 0; top: 825px; width: 999px; height: 74px; border: 1px solid #393647; border-radius: 15px; background: #322f46; color: #5f6f88; padding: 14px 15px 0 14px; }
.row { display: flex; align-items: center; height: 20px; font-size: 13.700px; letter-spacing: -.1px; }
.ph { flex: 1; line-height: 22px; padding-top: 2px; }
.clip { width: 13px; height: 13px; margin-right: 14px; }
.send { width: 20px; height: 20px; border-radius: 5px; background: #5c4f88; display: grid; place-items: center; margin-right: -1px; }
.send svg { width: 10px; height: 10px; }
.opts { justify-content: flex-end; height: 16px; margin-top: 15px; font-size: 10.600px; padding-right: 3px; letter-spacing: -.15px; }
.chev { width: 8px; height: 8px; margin: 0 20px 0 6px; }
.sliders { width: 12px; height: 12px; margin-left: 4px; }
.scroll { width: 10px; margin-left: auto; background: #0f0f13; position: relative; display: flex; flex-direction: column; align-items: center; justify-content: space-between; padding: 3px 0; }
.scroll .thumb { position: absolute; left: 2px; top: 392px; width: 6px; height: 42px; border-radius: 3px; background: #475063; }
.up, .down { border: 3px solid transparent; border-bottom: 4px solid #475063; border-top: 0; }
.down { border-bottom: 0; border-top: 4px solid #56647a; }

/* taskbar */
.taskbar { height: 48px; flex: none; display: flex; align-items: center; border-top: 1px solid #b3aaa4; background: linear-gradient(90deg, #dfe2c8 0, #ebdcc2 90px, #f0dccc 180px, #f0dccc 300px, #e9dfb8 345px, #e2e2b8 390px, #e1d9cb 460px, #e6dacb 560px, #e5dcbd 640px, #e2e2b5 700px, #dfd7cf 790px, #e6d6cc 880px, #ecd9cd 980px, #edddcd 1200px, #ecdccc); color: #1d1d1f; }
.widgets { width: 24px; height: 22px; margin-left: 20px; }
.apps-row { display: flex; align-items: center; margin-left: 499px; }
.app { position: relative; width: 38px; height: 38px; margin-right: 6px; border-radius: 4px; display: grid; place-items: center; }
.app svg { width: 24px; height: 24px; }
.app.on { background: #f4eee8; }
.app.run::after, .app.dot::after { content: ""; position: absolute; bottom: 0; left: 11px; width: 16px; height: 3px; border-radius: 2px; background: #0f78d4; }
.app.dot::after { left: 16px; width: 6px; background: #8a7f77; }
.app em { position: absolute; left: 20px; top: 2px; width: 16px; height: 16px; border-radius: 50%; background: #20222c; color: #fff; font: 10.500px/16px "Open Sans", sans-serif; text-align: center; }
.cal { font: bold 13.500px "Liberation Serif", serif; fill: #111; }
.wa-line { fill: none; stroke: #1b8f56; stroke-width: 2.400; overflow: visible; }
.wa-line .phone { fill: #1b8f56; stroke: none; }
.search { width: 218px; height: 31px; margin: 0 6px 0 1px; border-radius: 16px; background: #f7f5ec; border-bottom: 1px solid #c0b9ac; display: flex; align-items: center; gap: 10px; padding-left: 11px; font-size: 13px; color: #5d5b57; }
.search svg { width: 15px; height: 15px; }
.tray { margin-left: auto; display: flex; align-items: center; padding: 0 19px 1px 0; font-size: 11.700px; line-height: 16px; letter-spacing: -.15px; }
.caret { width: 12px; height: 12px; margin-right: 19px; }
.lang { text-align: center; width: 24px; margin-right: 17px; }
.net { width: 17px; height: 18px; margin-right: 7px; }
.vol { width: 18px; height: 16px; margin-right: 16px; }
.clock { text-align: right; width: 56px; white-space: nowrap; }
```
